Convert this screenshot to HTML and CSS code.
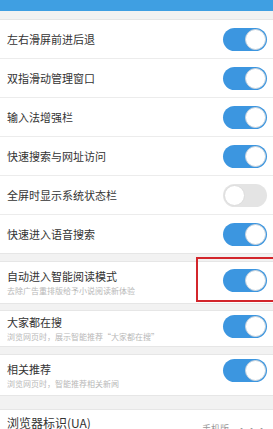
FILE: index.html
```html
<!DOCTYPE html>
<html lang="zh-CN">
<head>
<meta charset="utf-8">
<link rel="stylesheet" href="styles.css">
</head>
<body>
<div class="topbar"></div>
<div class="gap gap-top"></div>
<div class="group">
  <div class="row"><span class="title">左右滑屏前进后退</span><span class="switch on"><span class="knob"></span></span></div>
  <div class="row"><span class="title">双指滑动管理窗口</span><span class="switch on"><span class="knob"></span></span></div>
  <div class="row"><span class="title">输入法增强栏</span><span class="switch on"><span class="knob"></span></span></div>
  <div class="row"><span class="title">快速搜索与网址访问</span><span class="switch on"><span class="knob"></span></span></div>
  <div class="row"><span class="title">全屏时显示系统状态栏</span><span class="switch off"><span class="knob"></span></span></div>
  <div class="row last"><span class="title">快速进入语音搜索</span><span class="switch on"><span class="knob"></span></span></div>
</div>
<div class="gap"></div>
<div class="group">
  <div class="row tall r7">
    <div class="text"><span class="title">自动进入智能阅读模式</span><span class="sub">去除广告重排版给予小说阅读新体验</span></div>
    <span class="switch on"><span class="knob"></span></span>
    <span class="highlight"></span>
  </div>
</div>
<div class="gap gap-small"></div>
<div class="group">
  <div class="row tall r8">
    <div class="text"><span class="title">大家都在搜</span><span class="sub">浏览网页时，展示智能推荐“大家都在搜”</span></div>
    <span class="switch on"><span class="knob"></span></span>
  </div>
</div>
<div class="gap"></div>
<div class="group">
  <div class="row tall r9">
    <div class="text"><span class="title">相关推荐</span><span class="sub">浏览网页时，智能推荐相关新闻</span></div>
    <span class="switch on"><span class="knob"></span></span>
  </div>
</div>
<div class="gap gap-big"></div>
<div class="group">
  <div class="row ua">
    <span class="title big">浏览器标识(UA)</span>
    <span class="value">手机版<span class="dots">···</span></span>
  </div>
</div>
</body>
</html>
```
FILE: styles.css
```css
html, body {
  margin: 0;
  padding: 0;
  background: #f2f2f2;
  font-family: "Noto Sans CJK SC", "Noto Sans", sans-serif;
  overflow: hidden;
}
.topbar {
  height: 11px;
  background: #3f9fe2;
}
.gap {
  height: 7px;
  background: #f2f2f2;
}
.gap-top {
  height: 8px;
}
.gap-small {
  height: 6px;
}
.gap-big {
  height: 13px;
}
.group {
  background: #fff;
  border-top: 1px solid #e6e6e6;
  border-bottom: 1px solid #e6e6e6;
}
.row {
  display: flex;
  align-items: center;
  justify-content: space-between;
  height: 38px;
  padding: 0 6px 0 7px;
  border-bottom: 1px solid #ececec;
  position: relative;
}
.row.last, .group .row.tall, .row.ua {
  border-bottom: none;
}
.row.r7 {
  height: 41px;
}
.row.r8 {
  height: 35px;
}
.row.r9 {
  height: 40px;
}
.tall .switch {
  margin-bottom: 4px;
}
.r9 .switch {
  margin-bottom: 10px;
}
.title {
  font-size: 11px;
  color: #333;
  line-height: 14px;
}
.title.big {
  font-size: 12px;
  line-height: 15px;
}
.text {
  display: flex;
  flex-direction: column;
  gap: 2px;
}
.sub {
  font-size: 8px;
  line-height: 11px;
  color: #b8b8b8;
}
.switch {
  width: 44px;
  height: 23px;
  border-radius: 12px;
  box-sizing: border-box;
  padding: 1px;
  display: flex;
  align-items: center;
  flex-shrink: 0;
}
.switch.on {
  background: #3c96e0;
  justify-content: flex-end;
}
.switch.off {
  background: #e4e4e4;
  justify-content: flex-start;
}
.knob {
  width: 21px;
  height: 21px;
  border-radius: 50%;
  background: #fff;
  box-sizing: border-box;
  border: 1px solid #c9d3dc;
}
.switch.off .knob {
  border-color: #dcdcdc;
}
.highlight {
  position: absolute;
  left: 196px;
  top: -5px;
  width: 77px;
  height: 45px;
  box-sizing: border-box;
  border: 2px solid #d3262c;
  border-right: none;
}
.row.ua {
  height: 30px;
  align-items: flex-start;
  padding-top: 5px;
}
.value {
  font-size: 9px;
  line-height: 11px;
  color: #999;
  margin-top: 8px;
}
.dots {
  margin-left: 8px;
  letter-spacing: 1px;
}
```
